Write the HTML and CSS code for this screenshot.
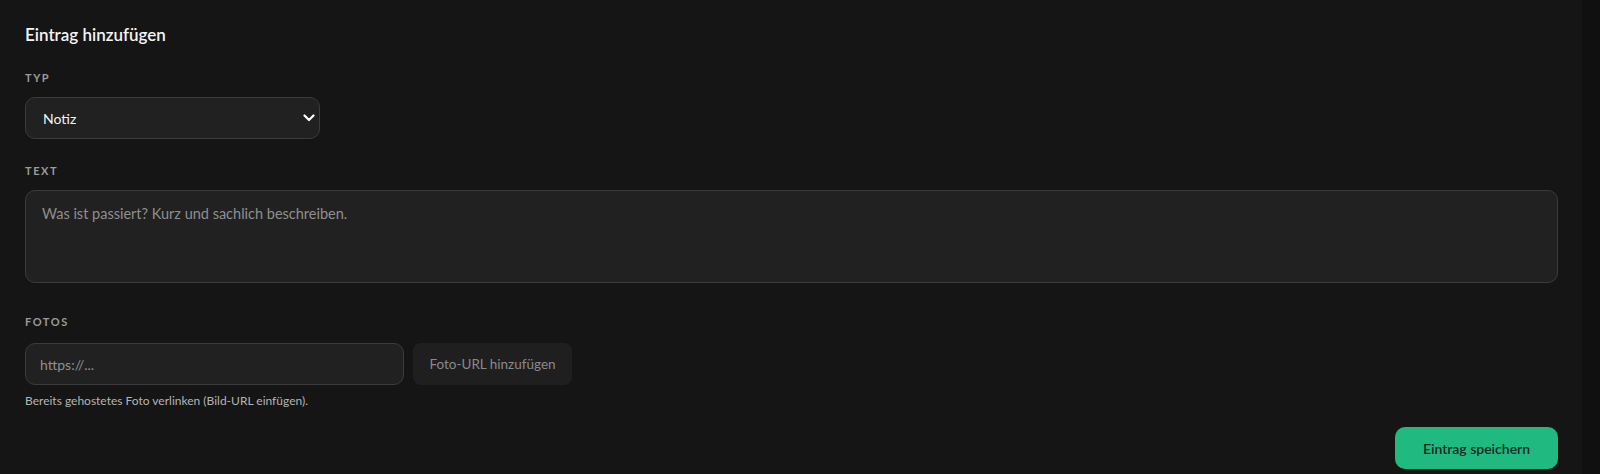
FILE: index.html
```html
<!DOCTYPE html>
<html lang="de">
<head>
  <meta charset="utf-8" />
  <meta name="viewport" content="width=device-width, initial-scale=1" />
  <title>Eintrag hinzufügen</title>
  <link rel="stylesheet" href="styles.css">
</head>
<body>
  <!-- Formular-Karte / entry form card -->
  <section class="card">
    <h2 class="card-title">Eintrag hinzufügen</h2>

    <div class="field">
      <label class="field-label" for="typ">Typ</label>
      <div class="select-wrap">
        <select id="typ" class="select">
          <option>Notiz</option>
          <option>Foto</option>
          <option>Mangel</option>
        </select>
        <svg class="select-arrow" width="12" height="8" viewBox="0 0 12 8" aria-hidden="true">
          <path d="M1.5 1.5 L6 6 L10.5 1.5" fill="none" stroke="#ffffff" stroke-width="2.2" stroke-linecap="round" stroke-linejoin="round"/>
        </svg>
      </div>
    </div>

    <div class="field">
      <label class="field-label" for="text">Text</label>
      <textarea id="text" class="textarea" placeholder="Was ist passiert? Kurz und sachlich beschreiben."></textarea>
    </div>

    <div class="field field-photos">
      <label class="field-label" for="foto">Fotos</label>
      <div class="photo-row">
        <input id="foto" class="input" type="text" placeholder="https://...">
        <button class="btn-secondary" type="button">Foto-URL hinzufügen</button>
      </div>
      <p class="hint">Bereits gehostetes Foto verlinken (Bild-URL einfügen).</p>
    </div>

    <div class="actions">
      <button class="btn-primary" type="button">Eintrag speichern</button>
    </div>
  </section>
</body>
</html>
```

FILE: styles.css
```css
body {
  margin: 0;
  background: #101010;
  font-family: "Lato", "Noto Sans", sans-serif;
  color: #eeeeee;
}
.card {
  background: #151515;
  margin-right: 18px;
  min-height: 100vh;
  box-sizing: border-box;
  padding: 24px 24px 0 25px;
}
.card-title {
  margin: 0 0 24px;
  font-size: 17px;
  line-height: 22px;
  font-weight: 600;
  color: #f4f4f4;
}
.field {
  margin-bottom: 24px;
}
.field-label {
  display: block;
  font-size: 11px;
  line-height: 16px;
  font-weight: 700;
  letter-spacing: 0.14em;
  text-transform: uppercase;
  color: #9b9b9b;
  margin-bottom: 11px;
}
.select-wrap {
  position: relative;
  width: 295px;
}
.select {
  appearance: none;
  -webkit-appearance: none;
  width: 100%;
  height: 42px;
  box-sizing: border-box;
  padding: 0 34px 0 17px;
  background: #212121;
  border: 1px solid #3b3b3b;
  border-radius: 10px;
  color: #f4f4f4;
  font-family: inherit;
  font-size: 14px;
  outline: none;
}
.select-arrow {
  position: absolute;
  right: 5px;
  top: 17px;
  pointer-events: none;
}
.textarea {
  display: block;
  width: 100%;
  height: 93px;
  box-sizing: border-box;
  padding: 14px 16px;
  background: #212121;
  border: 1px solid #3b3b3b;
  border-radius: 10px;
  color: #eeeeee;
  font-family: inherit;
  font-size: 14.5px;
  resize: none;
  outline: none;
}
.textarea::placeholder,
.input::placeholder {
  color: #8f8f8f;
}
.field-photos {
  margin-top: 31px;
  margin-bottom: 0;
}
.field-photos .field-label {
  margin-bottom: 13px;
}
.photo-row {
  display: flex;
  gap: 9px;
}
.input {
  width: 379px;
  height: 42px;
  box-sizing: border-box;
  padding: 0 14px;
  background: #212121;
  border: 1px solid #3b3b3b;
  border-radius: 10px;
  color: #eeeeee;
  font-family: inherit;
  font-size: 14px;
  outline: none;
}
.btn-secondary {
  height: 42px;
  width: 159px;
  border: none;
  border-radius: 8px;
  background: #1f1f1f;
  color: #8a8a8a;
  font-family: inherit;
  font-size: 13.5px;
}
.hint {
  margin: 8px 0 0;
  font-size: 12px;
  line-height: 16px;
  color: #b4b4b4;
}
.actions {
  display: flex;
  justify-content: flex-end;
  margin-top: 18px;
}
.btn-primary {
  width: 163px;
  height: 42px;
  border: none;
  border-radius: 10px;
  background: #20b97f;
  color: #0e2a1e;
  font-family: inherit;
  font-size: 14px;
  font-weight: 600;
}
```
